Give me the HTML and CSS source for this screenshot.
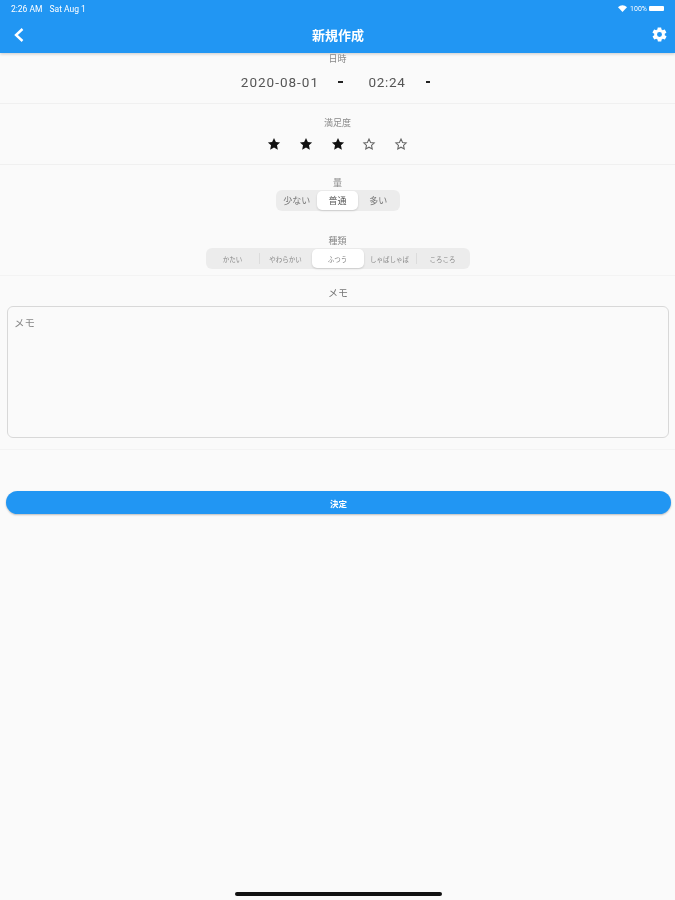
FILE: index.html
```html
<!doctype html>
<html>

<head>
    <meta charset="UTF-8">
    <title>新規作成</title>
    <link rel="stylesheet" href="styles.css">
</head>

<body>
<div class="header">
    <div class="statusBar">
        <span>2:26 AM</span>
        <span class="statusDate">Sat Aug 1</span>
        <span class="statusRight">
            <svg class="wifi" width="9" height="7" viewBox="0 0 18 14"><path d="M0 4.500C5-1 13-1 18 4.500L9 14z" fill="#fff"/></svg>
            <span>100%</span>
            <span class="battery"></span>
        </span>
    </div>
    <div class="navBar">
        <svg class="back" width="12" height="16" viewBox="0 0 12 16"><path d="M9.500 2L3 8l6.500 6" fill="none" stroke="#fff" stroke-width="2.400"/></svg>
        <div class="navTitle">新規作成</div>
        <svg class="gear" width="17" height="17" viewBox="0 0 24 24"><path fill="#fff" d="M19.400 13c0-.3.1-.7.1-1s0-.7-.1-1l2.100-1.600c.2-.2.2-.4.1-.6l-2-3.500c-.1-.2-.4-.3-.6-.2l-2.500 1c-.5-.4-1.100-.7-1.700-1l-.4-2.600c0-.3-.2-.4-.5-.4h-4c-.3 0-.5.1-.5.4l-.4 2.600c-.6.3-1.200.6-1.700 1l-2.500-1c-.2-.1-.5 0-.6.2l-2 3.500c-.1.2-.1.4.1.6L4.600 11c0 .3-.1.7-.1 1s0 .7.1 1l-2.100 1.600c-.2.2-.2.4-.1.6l2 3.500c.1.2.4.3.6.2l2.500-1c.5.4 1.100.7 1.700 1l.4 2.600c0 .3.2.4.5.4h4c.3 0 .5-.1.5-.4l.4-2.600c.6-.3 1.200-.6 1.700-1l2.500 1c.2.1.5 0 .6-.2l2-3.500c.1-.2.1-.4-.1-.6zM12 15.500a3.500 3.500 0 1 1 0-7 3.500 3.500 0 0 1 0 7z"/></svg>
    </div>
</div>

<div class="section dateSection">
    <div class="label">日時</div>
    <div class="dateRow">
        <span class="dateText">2020-08-01</span>
        <span class="arrow arrowDate"></span>
        <span class="timeText">02:24</span>
        <span class="arrow arrowTime"></span>
    </div>
</div>

<div class="section starSection">
    <div class="label">満足度</div>
    <div class="stars">
        <svg width="14" height="14" viewBox="0 0 24 24"><path class="starFull" d="M12 1.500l3.200 7 7.300.8-5.400 5 1.500 7.500L12 18l-6.600 3.800 1.500-7.500-5.400-5 7.300-.8z"/></svg>
        <svg width="14" height="14" viewBox="0 0 24 24"><path class="starFull" d="M12 1.500l3.200 7 7.300.8-5.400 5 1.500 7.500L12 18l-6.600 3.800 1.500-7.500-5.400-5 7.300-.8z"/></svg>
        <svg width="14" height="14" viewBox="0 0 24 24"><path class="starFull" d="M12 1.500l3.200 7 7.300.8-5.400 5 1.500 7.500L12 18l-6.600 3.800 1.500-7.500-5.400-5 7.300-.8z"/></svg>
        <svg width="14" height="14" viewBox="0 0 24 24"><path class="starEmpty" d="M12 3.500l2.700 5.900 6.200.7-4.600 4.300 1.300 6.300L12 17.500l-5.600 3.200 1.300-6.300-4.600-4.300 6.200-.7z"/></svg>
        <svg width="14" height="14" viewBox="0 0 24 24"><path class="starEmpty" d="M12 3.500l2.700 5.900 6.200.7-4.600 4.300 1.300 6.300L12 17.500l-5.600 3.200 1.300-6.300-4.600-4.300 6.200-.7z"/></svg>
    </div>
</div>

<div class="section amountSection">
    <div class="label">量</div>
    <div class="segment amount">
        <div class="segItem">少ない</div>
        <div class="segItem selected">普通</div>
        <div class="segItem">多い</div>
    </div>
</div>

<div class="section kindSection">
    <div class="label">種類</div>
    <div class="segment kind">
        <div class="segItem">かたい</div>
        <div class="sep"></div>
        <div class="segItem">やわらかい</div>
        <div class="segItem selected">ふつう</div>
        <div class="segItem">しゃばしゃば</div>
        <div class="sep"></div>
        <div class="segItem">ころころ</div>
    </div>
</div>

<div class="section memoSection">
    <div class="memoLabel">メモ</div>
    <div class="memoBox">メモ</div>
</div>

<div class="submit">決定</div>
<div class="homeBar"></div>
</body>

</html>
```

FILE: styles.css
```css
* {
    box-sizing: border-box;
}

body {
    margin: 0;
    height: 900px;
    overflow: hidden;
    display: flex;
    flex-direction: column;
    background-color: #fafafa;
    color: #555;
    font-family: Roboto, "Noto Sans CJK JP", sans-serif;
    filter: blur(.35px);
}

.header {
    height: 53px;
    flex: none;
    background-color: #2196f3;
    color: #fff;
    box-shadow: 0 1px 3px rgba(0, 0, 0, .2);
}

.statusBar {
    height: 15px;
    padding: 2px 11px 0 11px;
    display: flex;
    align-items: center;
    font-size: 8.500px;
}

.statusDate {
    margin-left: 7px;
}

.statusRight {
    margin-left: auto;
    display: flex;
    align-items: center;
    font-size: 7px;
}

.wifi {
    margin-right: 3px;
}

.battery {
    width: 15px;
    height: 5px;
    margin-left: 2px;
    background-color: #fff;
    border-radius: 1px;
}

.navBar {
    height: 38px;
    padding: 1px 7px 0 13px;
    display: flex;
    align-items: center;
    justify-content: space-between;
}

.navTitle {
    font-size: 13px;
    font-weight: 700;
}

.section {
    flex: none;
    display: flex;
    flex-direction: column;
    align-items: center;
    border-bottom: 1px solid #f0f0f0;
}

.label {
    font-size: 9px;
    line-height: 12px;
    color: #888;
}

.dateSection {
    height: 51px;
}

.dateRow {
    width: 100%;
    margin-top: 7px;
    padding-right: 4px;
    display: flex;
    justify-content: center;
    align-items: center;
    line-height: 20px;
    font-size: 13.500px;
    color: #555;
}

.dateText {
    letter-spacing: 1px;
}

.timeText {
    letter-spacing: .7px;
}

.arrow {
    width: 4.500px;
    height: 2px;
    background-color: #222;
}

.arrowDate {
    margin: 0 26px 0 19px;
}

.arrowTime {
    margin-left: 20px;
}

.starSection {
    height: 61px;
    padding-top: 13px;
}

.stars {
    margin-top: 8px;
    display: flex;
    gap: 17.600px;
}

.starFull {
    fill: #111;
}

.starEmpty {
    fill: none;
    stroke: #666;
    stroke-width: 1.800;
}

.amountSection {
    height: 57px;
    padding-top: 12px;
    border: none;
}

.kindSection {
    height: 54px;
    padding-top: 13px;
    border-bottom: 1px solid #f3f3f3;
}

.segment {
    height: 21px;
    padding: 1px;
    margin-top: 1px;
    display: flex;
    align-items: center;
    background-color: #ececec;
    border-radius: 6px;
}

.segItem {
    flex: 1;
    height: 19px;
    display: flex;
    align-items: center;
    justify-content: center;
    color: #777;
    border-radius: 5px;
}

.selected {
    background-color: #fff;
    box-shadow: 0 1px 2px rgba(0, 0, 0, .15);
    color: #555;
}

.amount {
    width: 124px;
    font-size: 9px;
}

.kind {
    width: 264px;
    font-size: 6.500px;
}

.kind .segItem {
    color: #888;
}

.sep {
    width: 1px;
    height: 11px;
    background-color: #dcdcdc;
}

.memoSection {
    height: 174px;
    padding: 12px 6px 0 7px;
    border-bottom: 1px solid #f3f3f3;
}

.memoLabel {
    font-size: 10px;
    line-height: 12px;
    color: #777;
}

.memoBox {
    width: 100%;
    height: 132px;
    margin-top: 6px;
    padding: 10px 6px;
    font-size: 10.500px;
    line-height: 14px;
    color: #888;
    border: 1px solid #d8d8d8;
    border-radius: 6px;
}

.submit {
    height: 23px;
    flex: none;
    margin: 41px 4px 0 6px;
    display: flex;
    align-items: center;
    justify-content: center;
    font-size: 8.500px;
    font-weight: 700;
    color: #fff;
    background-color: #2196f3;
    border-radius: 12px;
    box-shadow: 0 1px 2px rgba(0, 0, 0, .25);
}

.homeBar {
    width: 207px;
    height: 4px;
    margin: auto 0 4px 234.500px;
    background-color: #111;
    border-radius: 2px;
}
```
